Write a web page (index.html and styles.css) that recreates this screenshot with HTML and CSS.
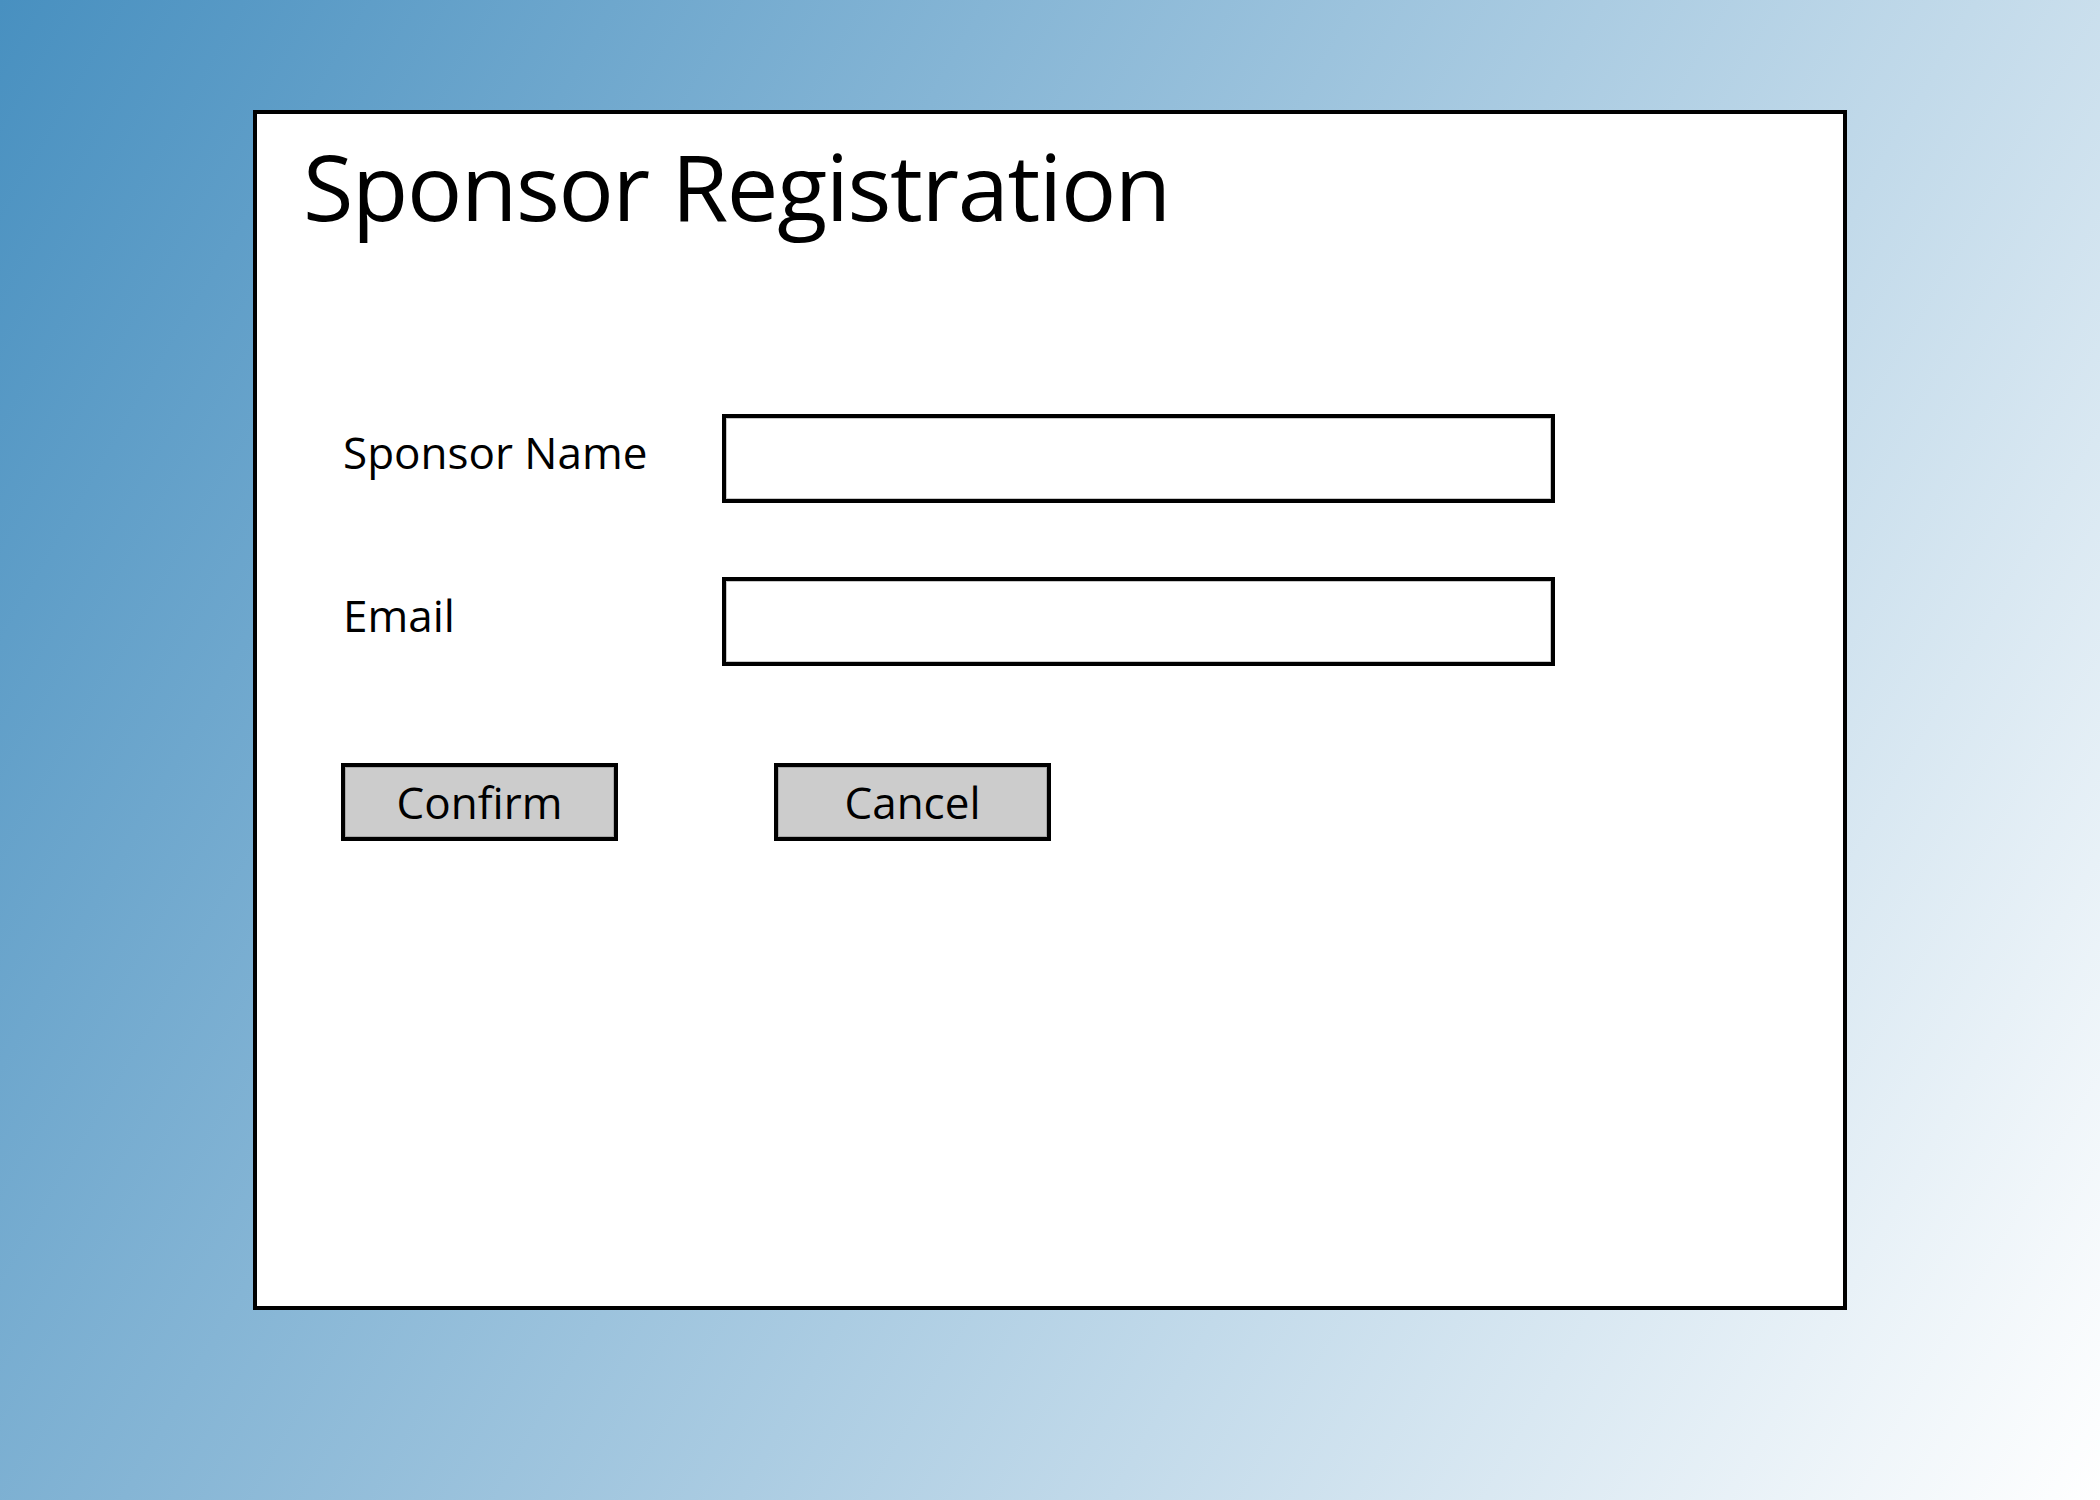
FILE: index.html
```html
<!DOCTYPE html>
<html lang="en">
<head>
<meta charset="utf-8">
<title>Sponsor Registration</title>
<link rel="stylesheet" href="styles.css">
</head>
<body>
<div class="page">
  <section class="panel">
    <h1 class="title">Sponsor Registration</h1>
    <div class="form">
      <label class="label" for="name">Sponsor Name</label>
      <input class="field" id="name" type="text">
      <label class="label" for="email">Email</label>
      <input class="field" id="email" type="text">
    </div>
    <div class="actions">
      <button class="btn" type="button">Confirm</button>
      <button class="btn" type="button">Cancel</button>
    </div>
  </section>
</div>
</body>
</html>
```
FILE: styles.css
```css
html, body {
  margin: 0;
  padding: 0;
}
body {
  width: 2100px;
  height: 1500px;
  background: linear-gradient(120deg, #4890c0 0%, #ffffff 100%);
  font-family: "Open Sans", "Noto Sans", sans-serif;
  color: #000;
  overflow: hidden;
}
.page {
  padding: 110px 0 0 253px;
}
.panel {
  box-sizing: border-box;
  width: 1594px;
  height: 1200px;
  background: #fff;
  border: 4px solid #000;
  padding: 22px 0 0 46px;
}
.title {
  margin: 0;
  font-size: 92px;
  line-height: 100px;
  font-weight: 400;
  letter-spacing: -1.35px;
}
.form {
  display: grid;
  grid-template-columns: 379px 833px;
  row-gap: 74px;
  align-items: center;
  margin: 178px 0 0 40px;
}
.label {
  font-size: 44px;
  line-height: 60px;
  margin-bottom: 14px;
}
.field {
  box-sizing: border-box;
  height: 89px;
  margin: 0;
  border: 4px solid #000;
  background: #fff;
  box-shadow: inset 0 0 0 1px #c8c8c8;
  outline: none;
}
.actions {
  display: flex;
  gap: 156px;
  margin: 97px 0 0 38px;
}
.btn {
  box-sizing: border-box;
  width: 277px;
  height: 78px;
  margin: 0;
  padding: 0;
  border: 4px solid #000;
  background: #cccccc;
  box-shadow: inset 0 0 0 1px #a8a8a8;
  font-family: "Open Sans", "Noto Sans", sans-serif;
  font-size: 44px;
  line-height: 70px;
  color: #000;
}
```
